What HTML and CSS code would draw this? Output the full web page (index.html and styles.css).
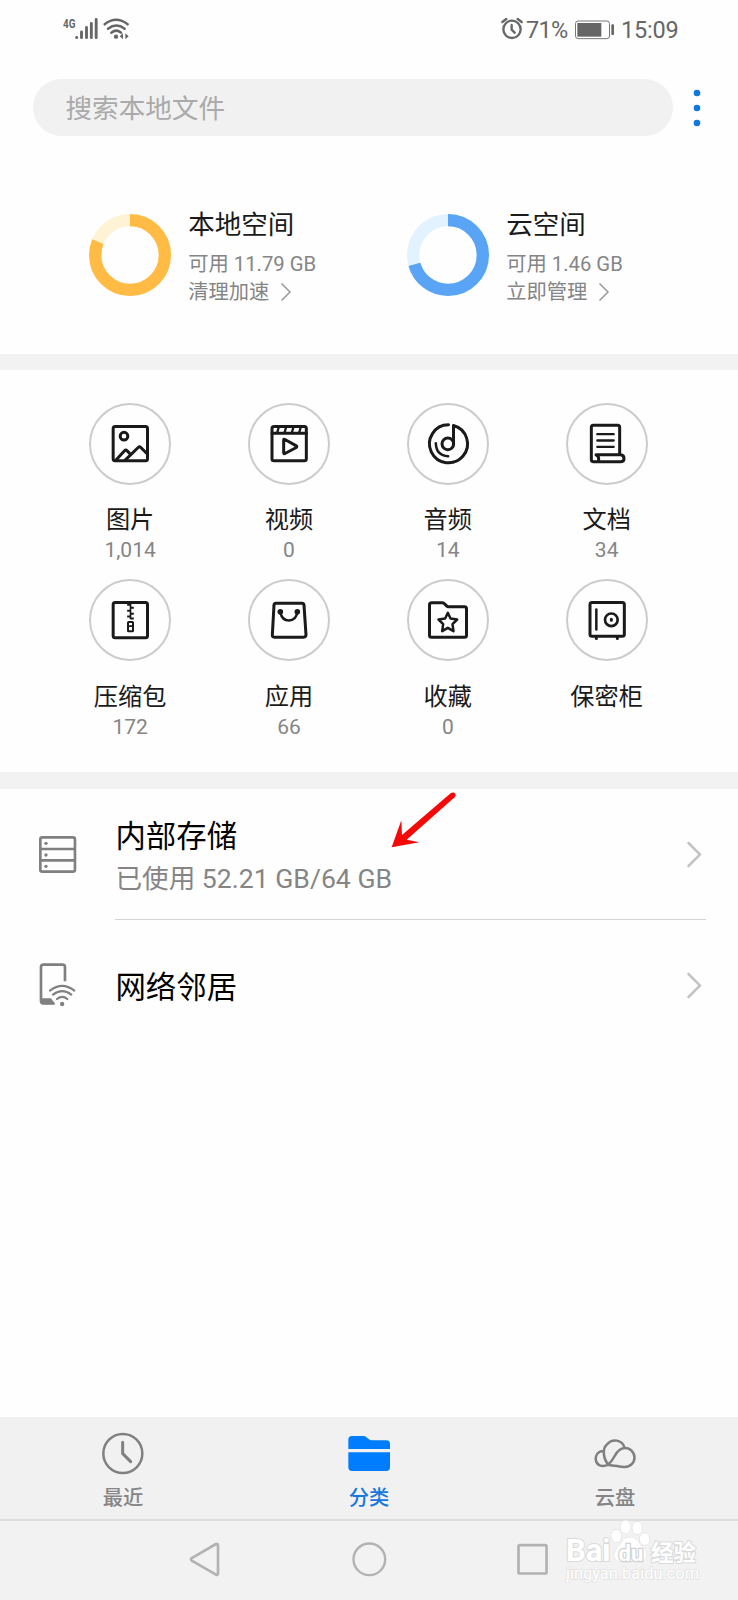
FILE: index.html
```html
<!DOCTYPE html>
<html lang="zh-CN">
<head>
<meta charset="utf-8">
<title>文件管理</title>
<link rel="stylesheet" href="styles.css">
</head>
<body>
<div class="screen">
  <header class="status">
    <div class="status-left">
      <span class="net">4G</span>
      <svg class="signal" viewBox="104 54 68 66"><g stroke="#666" stroke-width="8.500" stroke-linecap="round"><path d="M109 112v1M123.500 96v17M138.500 82v31M153 70v43M167.500 58v55"/></g></svg>
      <svg class="wifi" viewBox="188 54 80 66" fill="none" stroke="#666" stroke-width="7.500" stroke-linecap="round"><path d="M193 73Q227 46 262 73M203 86Q228 67 253 86M213 98Q228 86 242 98"/><circle cx="227" cy="110" r="6.500" fill="#666" stroke="none"/><path d="M238 109l10-9v18zM265 109l-10-9v18z" fill="#666" stroke="none"/></svg>
    </div>
    <div class="status-right">
      <svg class="alarm" viewBox="301 52 66 66" fill="none" stroke="#666" stroke-width="7" stroke-linecap="round"><circle cx="334" cy="89" r="26"/><path d="M305 67l12-9M363 67l-12-9M333 76v14l9 9"/></svg>
      <span class="pct">71%</span>
      <svg class="battery" viewBox="525 58 120 60"><rect x="526.500" y="61" width="102" height="53" rx="8" fill="none" stroke="#777" stroke-width="3"/><rect x="532" y="67" width="72" height="41" fill="#666"/><rect x="634" y="71" width="8" height="32" rx="3" fill="#666"/></svg>
      <span class="time">15:09</span>
    </div>
  </header>

  <div class="search-row">
    <div class="search">搜索本地文件</div>
    <svg class="more" viewBox="0 0 8 38" fill="#0f78dc"><circle cx="4" cy="4" r="3.300"/><circle cx="4" cy="19" r="3.300"/><circle cx="4" cy="34" r="3.300"/></svg>
  </div>

  <section class="storage">
    <div class="space">
      <svg class="donut" viewBox="0 0 82 82" fill="none" stroke-width="12.300"><circle cx="41" cy="41" r="34.850" stroke="#fff3d6"/><circle cx="41" cy="41" r="34.850" stroke="#ffbb43" pathLength="100" stroke-dasharray="81.300 100" transform="rotate(-90 41 41)"/></svg>
      <div class="space-text">
        <div class="space-title">本地空间</div>
        <div class="space-line">可用 11.79 GB</div>
        <div class="space-line">清理加速<svg class="chev-s" viewBox="0 0 12 20"><path d="M1.500 1.500L10 10l-8.500 8.500" fill="none" stroke="#999" stroke-width="1.500"/></svg></div>
      </div>
    </div>
    <div class="space">
      <svg class="donut" viewBox="0 0 82 82" fill="none" stroke-width="12.300"><circle cx="41" cy="41" r="34.850" stroke="#e3f2ff"/><circle cx="41" cy="41" r="34.850" stroke="#59a4f5" pathLength="100" stroke-dasharray="70.700 100" transform="rotate(-90 41 41)"/></svg>
      <div class="space-text">
        <div class="space-title">云空间</div>
        <div class="space-line">可用 1.46 GB</div>
        <div class="space-line">立即管理<svg class="chev-s" viewBox="0 0 12 20"><path d="M1.500 1.500L10 10l-8.500 8.500" fill="none" stroke="#999" stroke-width="1.500"/></svg></div>
      </div>
    </div>
  </section>

  <div class="band"></div>

  <section class="grid">
    <div class="cell">
      <svg class="ico" viewBox="57.500 38.500 246 246"><circle class="ring" cx="180.500" cy="161.500" r="120"/><rect x="130" y="109" width="103" height="103" rx="6"/><circle cx="162.500" cy="138" r="11.500"/><path d="M138 210l26-28q4-4 8 0l6 6M166 210l39-38q4-4 8 0l18 18"/></svg>
      <div class="name">图片</div><div class="count">1,014</div>
    </div>
    <div class="cell">
      <svg class="ico" viewBox="534 38.500 246 246"><circle class="ring" cx="657" cy="161.500" r="120"/><rect x="606" y="109" width="103" height="103" rx="6"/><path d="M606 129h103M641 149v39q0 4 4 2l34-18q3-3 0-5l-34-19q-4-2-4 1z"/><path d="M626 112l-4 14M648 112l-4 14M670 112l-4 14M692 112l-4 14" stroke-width="7"/></svg>
      <div class="name">视频</div><div class="count">0</div>
    </div>
    <div class="cell">
      <svg class="ico" viewBox="80.500 38.500 246 246"><circle class="ring" cx="203.500" cy="161.500" r="120"/><path d="M205 104A57 57 0 1 0 220 106V161"/><circle cx="203" cy="161" r="17.500"/><path d="M167 159Q168 196 204 198" stroke-width="7.500"/></svg>
      <div class="name">音频</div><div class="count">14</div>
    </div>
    <div class="cell">
      <svg class="ico" viewBox="558 38.500 246 246"><circle class="ring" cx="681" cy="161.500" r="120"/><path d="M719 192V111q0-6-6-6H640q-6 0-6 6V208q0 7 7 7H722q10 0 10-10 0-10-10-11H648q11 4 7 20"/><path d="M652 132h49M652 151h49M652 170h49" stroke-width="7"/></svg>
      <div class="name">文档</div><div class="count">34</div>
    </div>
    <div class="cell">
      <svg class="ico" viewBox="57.500 26.500 246 246"><circle class="ring" cx="180.500" cy="149.500" r="120"/><rect x="130" y="97" width="103" height="106" rx="6"/><rect x="174.500" y="155.500" width="15" height="28" rx="2" stroke-width="6"/><path d="M175 168h14" stroke-width="5"/><path d="M182 98v49" stroke-width="5" stroke-linecap="butt"/><path d="M172 104h10M182 113h10M172 122h10M182 131h10M172 139h10M182 145h10" stroke-width="6" stroke-linecap="butt"/></svg>
      <div class="name">压缩包</div><div class="count">172</div>
    </div>
    <div class="cell">
      <svg class="ico" viewBox="534 26.500 246 246"><circle class="ring" cx="657" cy="149.500" r="120"/><path d="M618 99H696q6 0 6 6L708 194q0 7-7 7H613q-7 0-6-7L612 105q0-6 6-6z"/><path d="M631 126Q636 151 657 151Q678 151 682 126" stroke-width="7.500"/><circle cx="631" cy="125" r="4"/><circle cx="682" cy="125" r="4"/></svg>
      <div class="name">应用</div><div class="count">66</div>
    </div>
    <div class="cell">
      <svg class="ico" viewBox="80.500 26.500 246 246"><circle class="ring" cx="203.500" cy="149.500" r="120"/><path d="M155 98H186q5 0 8 4l6 6q2 2 5 2H253q6 0 6 6V195q0 6-6 6H154q-6 0-6-6V104q0-6 7-6z"/><path d="M203 128l8 17 20 3-14 14 3 21-17-10-17 10 3-21-14-14 20-3z" stroke-width="7.500"/></svg>
      <div class="name">收藏</div><div class="count">0</div>
    </div>
    <div class="cell">
      <svg class="ico" viewBox="558 26.500 246 246"><circle class="ring" cx="681" cy="149.500" r="120"/><rect x="630" y="97" width="103" height="101" rx="6"/><path d="M649 118v60" stroke-width="7.500"/><circle cx="694" cy="149" r="19" stroke-width="8"/><path d="M694 147.500v3M649 201v4M712 201v4"/></svg>
      <div class="name">保密柜</div>
    </div>
  </section>

  <div class="band"></div>

  <section class="list">
    <div class="row row-first">
      <svg class="row-ico disk" viewBox="56 226 112 111" fill="none" stroke="#808080" stroke-width="8"><rect x="60" y="230" width="104" height="103" rx="6"/><path d="M60 265h104M60 299h104"/><g fill="#808080" stroke="none"><circle cx="77" cy="248" r="5"/><circle cx="77" cy="283" r="5"/><circle cx="77" cy="317" r="5"/></g></svg>
      <div class="row-main">
        <div class="row-title">内部存储</div>
        <div class="row-sub">已使用 52.21 GB/64 GB</div>
      </div>
      <svg class="chev" viewBox="0 0 15 27"><path d="M1.500 2L13 13.500 1.500 25" fill="none" stroke="#c4c4c4" stroke-width="2.500" stroke-linecap="round"/></svg>
      <svg class="arrow" viewBox="64 96 196 168"><path d="M66 262L95 181L97 225L243 100Q252 95 257 101Q260 107 255 112L111 239L149 247z" fill="#f50808"/></svg>
    </div>
    <div class="row row-second">
      <svg class="row-ico net-ico" viewBox="56 610 112 131" fill="none" stroke="#808080" stroke-width="8" stroke-linecap="round"><path d="M134 665V622q0-7-7-7H69q-7 0-7 7V723q0 8 7 8h33" stroke-linecap="butt"/><path d="M62 716H92l13 18H69q-7 0-7-7z" fill="#808080" stroke="none"/><path d="M89 693Q126 664 162 693M98 705Q126 684 153 705M110 718Q126 705 141 718" stroke-width="6.500"/><circle cx="125.500" cy="733" r="6.500" fill="#808080" stroke="none"/></svg>
      <div class="row-main"><div class="row-title">网络邻居</div></div>
      <svg class="chev" viewBox="0 0 15 27"><path d="M1.500 2L13 13.500 1.500 25" fill="none" stroke="#c4c4c4" stroke-width="2.500" stroke-linecap="round"/></svg>
    </div>
  </section>

  <footer class="bottom">
    <nav class="tabs">
      <div class="tab">
        <svg class="tab-ico" viewBox="123 96 132 132" fill="none" stroke="#808080" stroke-width="7.500" stroke-linecap="round"><circle cx="188.500" cy="160.500" r="58.500"/><path d="M188 127v34l24 24" stroke-width="9"/></svg>
        <span>最近</span>
      </div>
      <div class="tab active">
        <svg class="tab-ico" viewBox="861 96 132 132" fill="#007dff"><path d="M865 147V119q0-11 11-11H910q6 0 9 4l8 6q3 3 8 3H979q11 0 11 11v15zM865 157H990v45q0 11-11 11H876q-11 0-11-11z"/></svg>
        <span>分类</span>
      </div>
      <div class="tab">
        <svg class="tab-ico" viewBox="520 96 132 132" fill="none" stroke="#808080" stroke-width="7.500" stroke-linecap="round" stroke-linejoin="round"><path d="M566 194Q577 183 585 168Q598 144 616 144A28.500 28.500 0 0 1 616 201Q604 201 592 198Q574 196 566 194C552 178 546 147 562 133C578 115 607 118 615 143M551 153C532 154 528 169 528 177C530 196 546 203 566 194"/></svg>
        <span>云盘</span>
      </div>
    </nav>
    <div class="sysnav">
      <svg class="sys-b" viewBox="387 427 96 104" fill="none" stroke="#b2b2b2" stroke-width="8" stroke-linejoin="round"><path d="M394 476L468 433Q474 431 474 437V521Q474 527 468 525L394 482Q392 479 394 476z"/></svg>
      <svg class="sys-c" viewBox="875 427 104 104" fill="none" stroke="#b2b2b2" stroke-width="7"><circle cx="927" cy="479" r="47.500"/></svg>
      <svg class="sys-s" viewBox="287 427 104 104" fill="none" stroke="#b2b2b2" stroke-width="8"><rect x="297.500" y="436.500" width="84" height="85" rx="4"/></svg>
    </div>
    <div class="mark">
      <svg class="paw" viewBox="570 358 124 132" fill="#fff" stroke="#d9d9d9" stroke-width="3"><ellipse cx="589" cy="409" rx="15" ry="19"/><ellipse cx="617" cy="382" rx="15" ry="20"/><ellipse cx="652" cy="385" rx="15" ry="19"/><ellipse cx="674" cy="418" rx="15" ry="18"/><path d="M630 413C611 413 606 431 592 444C576 460 582 486 603 486Q631 482 656 486C679 487 689 463 670 445C655 431 650 413 630 413z"/></svg>
      <div class="mark-line"><span class="bai">Bai</span><span class="du">du</span><span class="jy">经验</span></div>
      <div class="mark-url">jingyan.baidu.com</div>
    </div>
  </footer>
</div>
</body>
</html>
```
FILE: styles.css
```css
* { box-sizing: border-box; }
body {
  margin: 0;
  background: #fefefe;
  font-family: Roboto, "Noto Sans CJK SC", sans-serif;
  color: #1a1a1a;
}
svg { display: block; flex: none; overflow: visible; }
.screen { display: flex; flex-direction: column; width: 738px; height: 1600px; overflow: hidden; }

.status { display: flex; justify-content: space-between; height: 58px; padding: 18px 60px 0 62.500px; color: #666; }
.status-left, .status-right { display: flex; align-items: flex-start; }
.net { width: 12px; font: bold 13px/11px "Roboto", sans-serif; white-space: nowrap; transform: scaleX(0.760); transform-origin: left; }
.signal { width: 22.700px; height: 22px; }
.wifi { width: 26.700px; height: 22px; margin-left: 5.500px; }
.alarm { width: 22px; height: 22px; margin-top: -1px; }
.pct, .time { font-size: 23.500px; line-height: 24px; white-space: nowrap; }
.pct { width: 42px; margin-left: 3px; letter-spacing: -0.700px; }
.battery { width: 40px; height: 20px; margin: 1.500px 0 0 7px; }
.time { width: 57px; margin-left: 6px; letter-spacing: -0.200px; }

.search-row { display: flex; align-items: center; padding: 21px 37px 0 32.500px; gap: 20px; }
.search { width: 640px; height: 57px; border-radius: 29px; background: #f1f1f1; padding-left: 33px; font-size: 26.600px; line-height: 60px; color: #aaa; }
.more { width: 8px; height: 38px; }

.storage { display: flex; height: 217.500px; padding: 68px 0 0 89.200px; }
.space { display: flex; width: 318px; }
.donut { width: 82px; height: 82px; margin-top: 10px; }
.space-text { padding-left: 17px; white-space: nowrap; }
.space-title { font-size: 26.500px; line-height: 41px; margin-bottom: 5px; }
.space-line { display: flex; align-items: center; font-size: 20.300px; line-height: 28px; color: #858585; }
.chev-s { width: 12px; height: 20px; margin-left: 11px; margin-top: -1px; }

.band { flex: none; height: 16.500px; background: #f2f2f2; }

.grid { display: grid; grid-template-columns: repeat(4, 158.850px); grid-auto-rows: 176.300px; height: 402px; padding: 33px 0 0 50.700px; }
.cell { display: flex; flex-direction: column; align-items: center; }
.ico { width: 82px; height: 82px; fill: none; stroke: #1a1a1a; stroke-width: 9; stroke-linecap: round; stroke-linejoin: round; }
.ico .ring { stroke: #ccc; stroke-width: 6; }
.name { margin-top: 17.400px; font-size: 24.200px; line-height: 36px; }
.count { font-size: 21px; line-height: 24px; color: #858585; }

.list { flex: 1; padding: 0 32.500px 0 38.700px; }
.row { position: relative; display: flex; align-items: center; }
.row-first { height: 131px; }
.row-second { height: 131px; }
.row-ico { width: 37.300px; }
.disk { height: 37px; }
.net-ico { height: 43.700px; }
.row-main { display: flex; flex-direction: column; flex: 1; align-self: stretch; justify-content: center; margin: 0 -19px 0 38.700px; padding: 5px 0 0 0.800px; white-space: nowrap; }
.row-first .row-main { padding-top: 7.500px; border-bottom: 1.500px solid #d4d4d4; }
.row-title { font-size: 30.400px; line-height: 44px; color: #000; }
.row-sub { font-size: 26.600px; line-height: 40px; color: #858585; }
.chev { width: 15px; height: 27px; margin-right: 4px; }
.arrow { position: absolute; left: 352.800px; top: 3.500px; width: 65.300px; height: 56px; }

.bottom { position: relative; flex: none; height: 183px; background: #f2f2f2; }
.tabs { display: flex; height: 103.500px; border-bottom: 2px solid #ddd; background: #f1f1f1; }
.tab { flex: 1; display: flex; flex-direction: column; align-items: center; padding-top: 15px; font-size: 20.300px; line-height: 30px; font-weight: 500; color: #858585; }
.tab-ico { width: 44px; height: 44px; margin-bottom: 7px; }
.active { color: #1578dc; }
.sysnav { display: flex; align-items: center; height: 78px; padding-left: 189px; }
.sys-b { width: 32px; height: 34.700px; }
.sys-c { width: 34.700px; height: 34.700px; margin-left: 130.500px; }
.sys-s { width: 34.700px; height: 34.700px; margin-left: 129px; }

.mark { position: absolute; left: 566px; top: 102px; width: 135px; color: #fff; -webkit-text-stroke: 2px #dadada; paint-order: stroke fill; }
.paw { position: absolute; left: 44px; top: 0; width: 41.300px; height: 44px; }
.mark-line { position: relative; display: flex; align-items: baseline; height: 46px; padding-top: 20px; font-weight: 700; line-height: 24px; white-space: nowrap; }
.bai { width: 52.500px; font-size: 31px; letter-spacing: 0; }
.du { width: 32.500px; font-size: 22px; -webkit-text-stroke: 2.500px #d2d2d2; }
.jy { font-size: 22.500px; }
.mark-url { font-size: 16.400px; line-height: 18px; -webkit-text-stroke: 1.500px #e2e2e2; }
```
